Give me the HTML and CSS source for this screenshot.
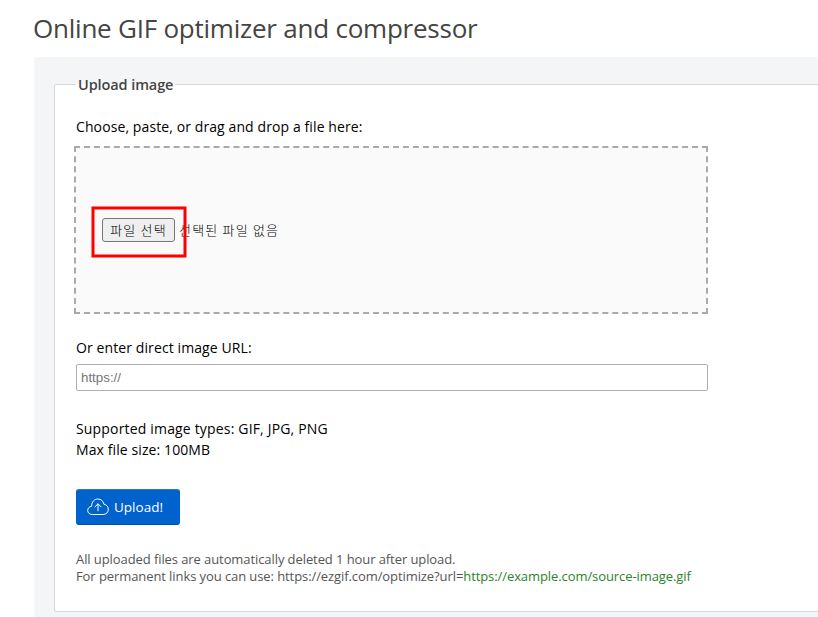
FILE: index.html
```html
<!DOCTYPE html>
<html lang="en">
<head>
<meta charset="utf-8">
<title>Online GIF optimizer and compressor</title>
<link rel="stylesheet" href="styles.css">
</head>
<body>
<h1>Online GIF optimizer and compressor</h1>
<main class="panel">
<form class="upload">
<h2 class="legend"><span>Upload image</span></h2>
<p class="label choose">Choose, paste, or drag and drop a file here:</p>
<div class="drop">
<div class="picker"><button type="button" class="file">파일 선택</button><span class="none">선택된 파일 없음</span><svg class="mark" width="96" height="52" viewBox="0 0 96 52"><rect x="2" y="2" width="92" height="48" fill="none" stroke="#f00" stroke-width="3"/></svg></div>
</div>
<p class="label or">Or enter direct image URL:</p>
<input class="url" type="text" placeholder="https://">
<p class="label info"><span class="types">Supported image types: GIF, JPG, PNG</span><br>Max file size: 100MB</p>
<button type="button" class="submit"><svg width="22" height="18" viewBox="0 0 22 18" fill="none" stroke="currentColor" stroke-linecap="round" stroke-linejoin="round"><path d="M5 16.500C2.500 16.500.7 14.800.7 12.500c0-2.200 1.500-3.900 3.900-4.200C4.600 4 7.200 1 10.800 1c3.200 0 5.500 2 6.100 5.200 2.700.5 4.400 2.500 4.400 5.100 0 3-2 5.200-4.800 5.200zM11 12.800V6M8 8.800L11 5.800l3 3"/></svg><span>Upload!</span></button>
<p class="notes">All uploaded files are automatically deleted 1 hour after upload.<br>For permanent links you can use: https://ezgif.com/optimize?url=<b>https://example.com/source-image.gif</b></p>
</form>
</main>
</body>
</html>
```

FILE: styles.css
```css
* { box-sizing: border-box; }
body { margin: 0; height: 617px; overflow: hidden; background: #fff; color: #000; font-family: "Open Sans", "Noto Sans CJK KR", sans-serif; }
h1, h2, p { margin: 0; font-weight: 400; }
h1 { height: 57px; padding: 9px 0 0 33px; font-size: 26px; line-height: 38px; letter-spacing: -0.23px; color: #444; white-space: nowrap; }
.panel { margin-left: 34px; height: 560px; padding: 27px 0 0 20px; background: #f4f5f7; border-radius: 2px 0 0 0; overflow: hidden; }
.upload { width: 820px; height: 528px; padding: 0 21px; background: #fff; border: 1px solid #d9dadb; border-radius: 2px; }
.legend { margin-top: -11px; height: 22px; font-size: 14.500px; line-height: 22px; letter-spacing: -0.1px; font-weight: 600; color: #444; }
.legend span { display: inline-block; padding: 0 2px; background: linear-gradient(#f4f5f7 10px, #fff 10px); }
.label { font-size: 14px; line-height: 21px; letter-spacing: 0.1px; white-space: nowrap; }
.types { letter-spacing: 0.17px; }
.choose { margin-top: 20px; }
.drop { width: 634px; height: 168px; margin: 9px 0 0 -2px; padding: 69px 0 0 26px; border: 2px dashed #aaa; background: #fafafa; }
.picker { position: relative; display: flex; align-items: center; gap: 4px; height: 25px; font: 300 13px "Noto Sans CJK KR", sans-serif; letter-spacing: 1.2px; }
.file { width: 73px; height: 24px; padding: 0; border: 1px solid #767676; border-radius: 3px; background: #efefef; color: #000; font: inherit; letter-spacing: inherit; white-space: nowrap; }
.mark { position: absolute; left: -11px; top: -11px; }
.or { margin-top: 23px; }
.url { display: block; width: 632px; height: 27px; margin-top: 6px; padding: 0 4px; border: 1px solid #b0b0b0; border-radius: 2px; background: #fff; font: 13.333px "Liberation Sans", sans-serif; }
.info { margin-top: 27px; }
.submit { display: flex; align-items: center; gap: 5px; width: 104px; height: 36px; margin-top: 29px; padding: 0 10px; border: 1px solid #0062cc; border-top-color: #2479d4; border-bottom-color: #0050a8; border-radius: 3px; background: #0062cc; color: #fff; font: 13.500px "Open Sans", sans-serif; }
.notes { margin-top: 26px; font-size: 13px; line-height: 17px; letter-spacing: -0.085px; color: #555; white-space: nowrap; }
.notes b { font-weight: 400; color: #2b842b; }
```
